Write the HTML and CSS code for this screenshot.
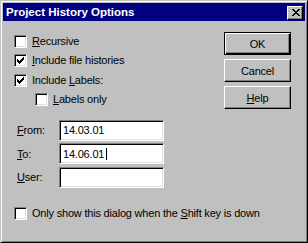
FILE: index.html
```html
<!DOCTYPE html>
<html lang="en">
<head>
  <meta charset="UTF-8" />
  <title>Project History Options</title>
  <link rel="stylesheet" href="styles.css">
</head>
<body>
  <div class="window">
    <div class="titlebar">
      <span class="title">Project History Options</span>
      <button class="close-btn">
        <svg width="8" height="7" viewBox="0 0 8 7" shape-rendering="crispEdges">
          <path d="M0 0h2v1H0z M6 0h2v1H6z M1 1h2v1H1z M5 1h2v1H5z M2 2h4v1H2z M3 3h2v1H3z M2 4h4v1H2z M1 5h2v1H1z M5 5h2v1H5z M0 6h2v1H0z M6 6h2v1H6z" fill="#000"/>
        </svg>
      </button>
    </div>

    <div class="client">
      <div class="left">
        <div class="options">
          <div class="check"><span class="box"></span><span><u>R</u>ecursive</span></div>
          <div class="check"><span class="box checked"><svg width="7" height="7" viewBox="0 0 7 7" shape-rendering="crispEdges"><path d="M6 0h1v1H6z M5 1h2v1H5z M0 2h1v1H0z M4 2h3v1H4z M0 3h2v1H0z M3 3h3v1H3z M0 4h5v1H0z M1 5h3v1H1z M2 6h1v1H2z" fill="#000"/></svg></span><span><u>I</u>nclude file histories</span></div>
          <div class="check"><span class="box checked"><svg width="7" height="7" viewBox="0 0 7 7" shape-rendering="crispEdges"><path d="M6 0h1v1H6z M5 1h2v1H5z M0 2h1v1H0z M4 2h3v1H4z M0 3h2v1H0z M3 3h3v1H3z M0 4h5v1H0z M1 5h3v1H1z M2 6h1v1H2z" fill="#000"/></svg></span><span>Include <u>L</u>abels:</span></div>
          <div class="check indent"><span class="box"></span><span><u>L</u>abels only</span></div>
        </div>

        <div class="fields">
          <div class="field-row"><span class="field-label"><u>F</u>rom:</span><div class="textbox">14.03.01</div></div>
          <div class="field-row"><span class="field-label"><u>T</u>o:</span><div class="textbox">14.06.01<span class="caret"></span></div></div>
          <div class="field-row"><span class="field-label"><u>U</u>ser:</span><div class="textbox"></div></div>
        </div>

        <div class="check footer"><span class="box"></span><span>Only show this dialog when the <u>S</u>hift key is down</span></div>
      </div>

      <div class="buttons">
        <button class="btn default">OK</button>
        <button class="btn">Cancel</button>
        <button class="btn"><u>H</u>elp</button>
      </div>
    </div>
  </div>
</body>
</html>
```

FILE: styles.css
```css
body {
  margin: 0;
  background: #c0c0c0;
  font-family: "Liberation Sans", Arial, sans-serif;
  font-size: 11px;
  letter-spacing: -0.2px;
  color: #000;
}
.window {
  width: 308px;
  height: 243px;
  box-sizing: border-box;
  padding: 2px;
  border: 1px solid;
  border-color: #c0c0c0 #000 #000 #c0c0c0;
  box-shadow: inset 1px 1px #fff, inset -1px -1px #808080;
  background: #c0c0c0;
  display: flex;
  flex-direction: column;
}
.titlebar {
  height: 18px;
  background: #000080;
  display: flex;
  align-items: center;
  padding: 0 2px 0 3px;
}
.title {
  color: #fff;
  font-weight: bold;
  font-size: 11.5px;
  letter-spacing: 0;
  flex: 1;
  line-height: 18px;
}
.close-btn {
  width: 16px;
  height: 14px;
  padding: 0 0 0 1px;
  margin-top: 1px;
  box-sizing: border-box;
  background: #c0c0c0;
  border: 1px solid;
  border-color: #fff #000 #000 #fff;
  box-shadow: inset -1px -1px #808080;
  display: flex;
  align-items: center;
  justify-content: center;
}
.client {
  flex: 1;
  display: flex;
  padding: 11px 14px 0 11px;
}
.left {
  flex: 1;
  min-width: 0;
}
.options {
  margin-top: 3px;
  display: flex;
  flex-direction: column;
  gap: 6.34px;
}
.check {
  display: flex;
  align-items: center;
  height: 13px;
  line-height: 13px;
  white-space: nowrap;
}
.check.indent {
  margin-left: 21px;
}
.box {
  width: 13px;
  height: 13px;
  box-sizing: border-box;
  background: #fff;
  border: 1px solid;
  border-color: #808080 #fff #fff #808080;
  box-shadow: inset 1px 1px #000, inset -1px -1px #dfdfdf;
  margin-right: 5px;
  flex: none;
  padding: 2px;
}
.box svg {
  display: block;
}
.fields {
  margin-top: 14px;
  display: flex;
  flex-direction: column;
  gap: 2.5px;
}
.field-row {
  display: flex;
  align-items: center;
}
.field-label {
  width: 42px;
  margin-left: 3px;
}
.textbox {
  width: 105px;
  height: 21px;
  box-sizing: border-box;
  background: #fff;
  border: 1px solid;
  border-color: #808080 #fff #fff #808080;
  box-shadow: inset 1px 1px #000, inset -1px -1px #dfdfdf;
  padding: 0 3px;
  display: flex;
  align-items: center;
}
.caret {
  display: inline-block;
  width: 1px;
  height: 12px;
  background: #000;
  margin-left: 2px;
}
.footer {
  margin-top: 19px;
}
.buttons {
  flex: none;
  display: flex;
  flex-direction: column;
  gap: 4px;
}
.btn {
  width: 67px;
  height: 23px;
  box-sizing: border-box;
  background: #c0c0c0;
  font-family: inherit;
  font-size: 11px;
  letter-spacing: -0.2px;
  color: #000;
  border: 1px solid;
  border-color: #fff #000 #000 #fff;
  box-shadow: inset -1px -1px #808080;
  padding: 0;
}
.btn.default {
  border-color: #000;
  box-shadow: inset 1px 1px #fff, inset -1px -1px #000, inset -2px -2px #808080;
}
```
